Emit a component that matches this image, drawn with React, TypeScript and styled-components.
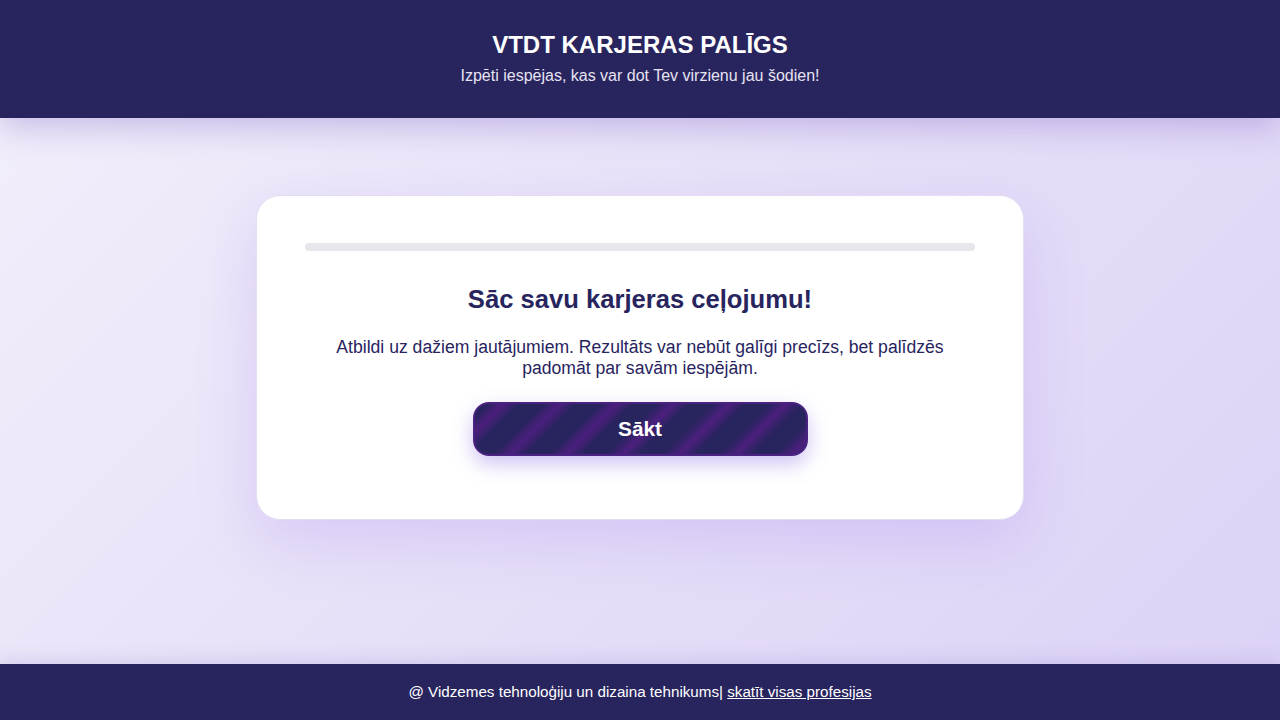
import React from 'react'
import styled, { createGlobalStyle } from 'styled-components'

const GlobalStyle = createGlobalStyle`
  * { box-sizing: border-box; }
  html, body { margin: 0; padding: 0; }
  body {
    font-family: "Liberation Sans", Arial, sans-serif;
    background: linear-gradient(135deg, #f3f0fb 0%, #e7e0f8 50%, #dcd2f6 100%);
    min-height: 100vh;
  }
`

export default function App(): React.ReactElement {
  return (
    <>
      <GlobalStyle />
      <Page>
        <Header>
          <Title>VTDT KARJERAS PALĪGS</Title>
          <Subtitle>Izpēti iespējas, kas var dot Tev virzienu jau šodien!</Subtitle>
        </Header>
        <Main>
          <Card>
            <Progress />
            <Heading>Sāc savu karjeras ceļojumu!</Heading>
            <Lead>
              Atbildi uz dažiem jautājumiem. Rezultāts var nebūt galīgi precīzs, bet palīdzēs
              padomāt par savām iespējām.
            </Lead>
            <StartButton>Sākt</StartButton>
          </Card>
        </Main>
        <Footer>
          @ Vidzemes tehnoloģiju un dizaina tehnikums| <a href="#">skatīt visas profesijas</a>
        </Footer>
      </Page>
    </>
  )
}

const Page = styled.div`
  min-height: 100vh;
  display: flex;
  flex-direction: column;
`
const Header = styled.header`
  background-color: #28245e;
  color: #fff;
  text-align: center;
  padding: 31px 20px 33px;
  box-shadow: 0 10px 30px rgba(110, 80, 190, 0.3);
  position: relative;
  z-index: 1;
`
const Title = styled.h1`
  margin: 0 0 8px;
  font-size: 24px;
  line-height: 27.6px;
  font-weight: 700;
`
const Subtitle = styled.p`
  margin: 0;
  font-size: 16px;
  line-height: 18.4px;
  color: #e6e3f2;
`
const Main = styled.main`
  flex: 1;
  display: flex;
  justify-content: center;
  align-items: flex-start;
  padding-top: 77px;
`
const Card = styled.section`
  width: 768px;
  background: #fff;
  border: 1px solid #e4def5;
  border-radius: 24px;
  padding: 47px 48px 63px;
  display: flex;
  flex-direction: column;
  align-items: center;
  text-align: center;
  box-shadow: 0 20px 60px rgba(150, 110, 235, 0.22);
`
const Progress = styled.div`
  width: 100%;
  height: 8px;
  border-radius: 4px;
  background: #e5e7eb;
`
const Heading = styled.h2`
  margin: 34px 0 0;
  font-size: 25.6px;
  line-height: 29.4px;
  font-weight: 700;
  color: #28245e;
`
const Lead = styled.p`
  margin: 23px 0 0;
  font-size: 17.6px;
  line-height: 21px;
  color: #28245e;
`
const StartButton = styled.button`
  margin-top: 23px;
  width: 50%;
  height: 54px;
  border-radius: 16px;
  border: 2px solid #4a2282;
  color: #fff;
  font-family: inherit;
  font-size: 20.8px;
  font-weight: 700;
  cursor: pointer;
  background: repeating-linear-gradient(
    135deg,
    #28245e 0px,
    #28245e 8px,
    #4b1f7d 20px,
    #28245e 32px,
    #28245e 40px
  );
  box-shadow: 0 8px 20px rgba(120, 80, 220, 0.35);
`
const Footer = styled.footer`
  background-color: #28245e;
  color: #fff;
  text-align: center;
  font-size: 15.2px;
  padding: 19px 20px 20px;
  box-shadow: 0 -4px 16px rgba(110, 80, 190, 0.15);
  a {
    color: #fff;
    text-decoration: underline;
  }
`
